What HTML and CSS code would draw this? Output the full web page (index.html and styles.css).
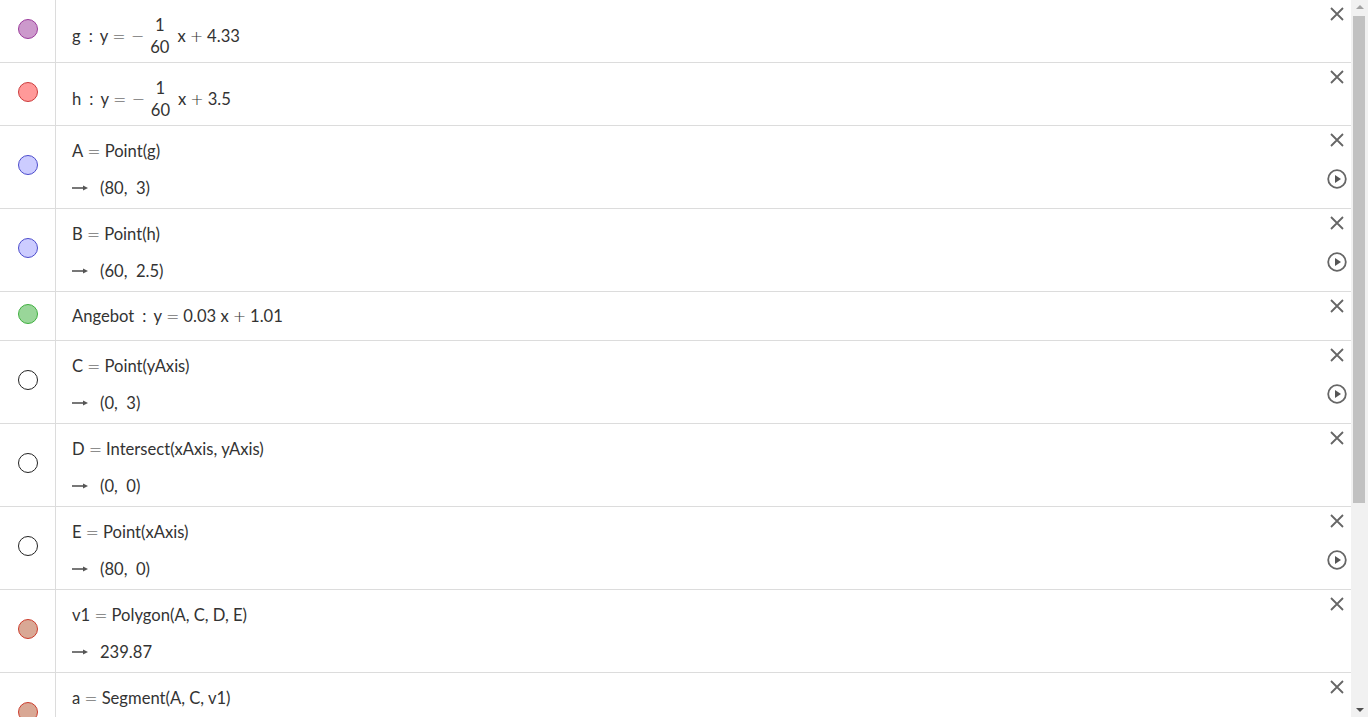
FILE: index.html
```html
<!DOCTYPE html>
<html lang="de">
  <head>
    <meta charset="UTF-8" />
    <title>Algebra</title>
    <link rel="stylesheet" href="styles.css">
  </head>
  <body>
    <div class="view">
      <div class="list">

        <div class="item frac-row">
          <div class="marker"><span class="dot dot-purple"></span></div>
          <div class="content">
            <div class="expr">
              <span>g<span class="sp">:</span>y<span class="op">=</span><span class="op op-minus">&minus;</span></span>
              <span class="frac"><span>1</span><span>60</span></span>
              <span>x<span class="op">+</span>4.33</span>
            </div>
          </div>
          <div class="actions">
            <svg class="ic-close" viewBox="0 0 14 14"><path d="M1 1L13 13M13 1L1 13" /></svg>
          </div>
        </div>

        <div class="item frac-row">
          <div class="marker"><span class="dot dot-red"></span></div>
          <div class="content">
            <div class="expr">
              <span>h<span class="sp">:</span>y<span class="op">=</span><span class="op op-minus">&minus;</span></span>
              <span class="frac"><span>1</span><span>60</span></span>
              <span>x<span class="op">+</span>3.5</span>
            </div>
          </div>
          <div class="actions">
            <svg class="ic-close" viewBox="0 0 14 14"><path d="M1 1L13 13M13 1L1 13" /></svg>
          </div>
        </div>

        <div class="item two-line">
          <div class="marker"><span class="dot dot-blue"></span></div>
          <div class="content">
            <div class="line">A<span class="op">=</span>Point(g)</div>
            <div class="line out">
              <svg class="arrow" viewBox="0 0 16 6"><path d="M0 3H13" /><path class="head" d="M11 0.5L16 3L11 5.5Z" /></svg>
              (80,&nbsp; 3)
            </div>
          </div>
          <div class="actions">
            <svg class="ic-close" viewBox="0 0 14 14"><path d="M1 1L13 13M13 1L1 13" /></svg>
            <svg class="ic-play" viewBox="0 0 20 20"><circle cx="10" cy="10" r="8.8" /><path class="head" d="M8 6L14 10L8 14Z" /></svg>
          </div>
        </div>

        <div class="item two-line">
          <div class="marker"><span class="dot dot-blue"></span></div>
          <div class="content">
            <div class="line">B<span class="op">=</span>Point(h)</div>
            <div class="line out">
              <svg class="arrow" viewBox="0 0 16 6"><path d="M0 3H13" /><path class="head" d="M11 0.5L16 3L11 5.5Z" /></svg>
              (60,&nbsp; 2.5)
            </div>
          </div>
          <div class="actions">
            <svg class="ic-close" viewBox="0 0 14 14"><path d="M1 1L13 13M13 1L1 13" /></svg>
            <svg class="ic-play" viewBox="0 0 20 20"><circle cx="10" cy="10" r="8.8" /><path class="head" d="M8 6L14 10L8 14Z" /></svg>
          </div>
        </div>

        <div class="item one-line">
          <div class="marker"><span class="dot dot-green"></span></div>
          <div class="content">
            <div class="line">Angebot<span class="sp">:</span>y<span class="op">=</span>0.03 x<span class="op">+</span>1.01</div>
          </div>
          <div class="actions">
            <svg class="ic-close" viewBox="0 0 14 14"><path d="M1 1L13 13M13 1L1 13" /></svg>
          </div>
        </div>

        <div class="item two-line">
          <div class="marker"><span class="dot dot-white"></span></div>
          <div class="content">
            <div class="line">C<span class="op">=</span>Point(yAxis)</div>
            <div class="line out">
              <svg class="arrow" viewBox="0 0 16 6"><path d="M0 3H13" /><path class="head" d="M11 0.5L16 3L11 5.5Z" /></svg>
              (0,&nbsp; 3)
            </div>
          </div>
          <div class="actions">
            <svg class="ic-close" viewBox="0 0 14 14"><path d="M1 1L13 13M13 1L1 13" /></svg>
            <svg class="ic-play" viewBox="0 0 20 20"><circle cx="10" cy="10" r="8.8" /><path class="head" d="M8 6L14 10L8 14Z" /></svg>
          </div>
        </div>

        <div class="item two-line">
          <div class="marker"><span class="dot dot-white"></span></div>
          <div class="content">
            <div class="line">D<span class="op">=</span>Intersect(xAxis, yAxis)</div>
            <div class="line out">
              <svg class="arrow" viewBox="0 0 16 6"><path d="M0 3H13" /><path class="head" d="M11 0.5L16 3L11 5.5Z" /></svg>
              (0,&nbsp; 0)
            </div>
          </div>
          <div class="actions">
            <svg class="ic-close" viewBox="0 0 14 14"><path d="M1 1L13 13M13 1L1 13" /></svg>
          </div>
        </div>

        <div class="item two-line">
          <div class="marker"><span class="dot dot-white"></span></div>
          <div class="content">
            <div class="line">E<span class="op">=</span>Point(xAxis)</div>
            <div class="line out">
              <svg class="arrow" viewBox="0 0 16 6"><path d="M0 3H13" /><path class="head" d="M11 0.5L16 3L11 5.5Z" /></svg>
              (80,&nbsp; 0)
            </div>
          </div>
          <div class="actions">
            <svg class="ic-close" viewBox="0 0 14 14"><path d="M1 1L13 13M13 1L1 13" /></svg>
            <svg class="ic-play" viewBox="0 0 20 20"><circle cx="10" cy="10" r="8.8" /><path class="head" d="M8 6L14 10L8 14Z" /></svg>
          </div>
        </div>

        <div class="item two-line">
          <div class="marker"><span class="dot dot-brown"></span></div>
          <div class="content">
            <div class="line">v1<span class="op">=</span>Polygon(A, C, D, E)</div>
            <div class="line out">
              <svg class="arrow" viewBox="0 0 16 6"><path d="M0 3H13" /><path class="head" d="M11 0.5L16 3L11 5.5Z" /></svg>
              239.87
            </div>
          </div>
          <div class="actions">
            <svg class="ic-close" viewBox="0 0 14 14"><path d="M1 1L13 13M13 1L1 13" /></svg>
          </div>
        </div>

        <div class="item two-line">
          <div class="marker"><span class="dot dot-brown"></span></div>
          <div class="content">
            <div class="line">a<span class="op">=</span>Segment(A, C, v1)</div>
          </div>
          <div class="actions">
            <svg class="ic-close" viewBox="0 0 14 14"><path d="M1 1L13 13M13 1L1 13" /></svg>
          </div>
        </div>

      </div>

      <div class="scrollbar">
        <span class="sb-arrow sb-up"></span>
        <div class="sb-track"><div class="sb-thumb"></div></div>
        <span class="sb-arrow sb-down"></span>
      </div>
    </div>
  </body>
</html>
```

FILE: styles.css
```css
html,
body {
  margin: 0;
  height: 100%;
  overflow: hidden;
}

body {
  font-family: "Lato", "Liberation Sans", sans-serif;
  font-size: 16.6px;
  color: #333;
  background: #fff;
}

.view {
  display: flex;
  height: 717px;
}

.list {
  flex: 1;
  display: flex;
  flex-direction: column;
  overflow: hidden;
}

.item {
  display: grid;
  grid-template-columns: 56px 1fr 28px;
  border-bottom: 1px solid #dcdcdc;
  flex-shrink: 0;
}

.frac-row {
  height: 62px;
}

.two-line {
  height: 82px;
}

.one-line {
  height: 48px;
}

.marker {
  border-right: 1px solid #dcdcdc;
  display: flex;
  align-items: center;
  justify-content: center;
  padding-bottom: 4px;
}

.dot {
  width: 18px;
  height: 18px;
  border-radius: 50%;
  border: 1px solid #333;
  background: #fff;
}

.dot-purple {
  background: #cc99cc;
  border-color: #9c3c9c;
}

.dot-red {
  background: #ff9999;
  border-color: #cc3c3c;
}

.dot-blue {
  background: #ccccff;
  border-color: #4c4ccc;
}

.dot-green {
  background: #99d699;
  border-color: #40b040;
}

.dot-white {
  background: #fff;
  border-color: #222;
}

.dot-brown {
  background: #d9a895;
  border-color: #cc3c2c;
}

.content {
  padding-left: 16px;
}

.line {
  line-height: 36px;
  white-space: nowrap;
}

.two-line .content {
  padding-top: 7px;
}

.one-line .content {
  padding-top: 6px;
}

.frac-row .content {
  padding-top: 15px;
}

.expr {
  display: flex;
  align-items: center;
  height: 42px;
  white-space: nowrap;
}

.frac {
  display: inline-flex;
  flex-direction: column;
  align-items: center;
  margin: 0 8px 0 6px;
  line-height: 20px;
  gap: 2px;
}

.op {
  font-family: "DejaVu Sans", sans-serif;
  font-weight: 300;
  font-size: 16px;
  margin: 0 4px;
}

.op-minus {
  margin: 0 0 0 1px;
}

.sp {
  margin: 0 7px 0 8px;
}

.out {
  display: flex;
  align-items: center;
}

.arrow {
  width: 16px;
  height: 6px;
  margin-right: 12px;
  fill: none;
  stroke: #555;
  stroke-width: 1.6;
}

.arrow .head,
.ic-play .head {
  fill: #555;
  stroke: none;
}

.actions {
  display: flex;
  flex-direction: column;
  align-items: center;
  padding-top: 7px;
}

.ic-close {
  width: 14px;
  height: 14px;
  fill: none;
  stroke: #666;
  stroke-width: 1.8;
}

.ic-play {
  width: 20px;
  height: 20px;
  margin-top: 22px;
  fill: none;
  stroke: #666;
  stroke-width: 1.8;
}

.scrollbar {
  width: 17px;
  background: #f1f1f1;
  display: flex;
  flex-direction: column;
  align-items: center;
}

.sb-track {
  flex: 1;
  width: 100%;
  padding-top: 2px;
}

.sb-thumb {
  height: 487px;
  margin: 0 3px 0 2px;
  background: #c1c1c1;
}

.sb-arrow {
  width: 0;
  height: 0;
  border-left: 4px solid transparent;
  border-right: 4px solid transparent;
  margin: 5px 0;
}

.sb-up {
  border-bottom: 4px solid #a3a3a3;
}

.sb-down {
  border-top: 4px solid #505050;
}
```
